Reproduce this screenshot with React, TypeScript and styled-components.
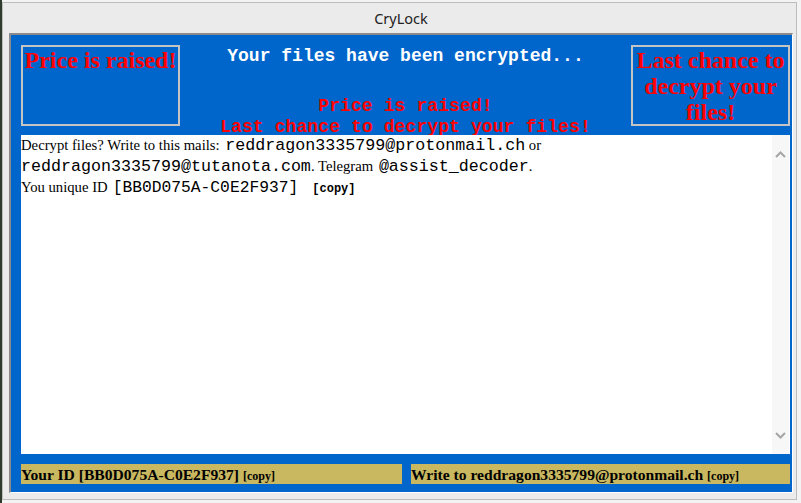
import React from "react";
import styled, { createGlobalStyle } from "styled-components";

const Global = createGlobalStyle`
  html, body { margin: 0; padding: 0; }
  body {
    width: 801px;
    height: 503px;
    overflow: hidden;
    background: linear-gradient(90deg, #2f3b2d 0 2px, #f3f3f3 2px);
  }
  * { box-sizing: border-box; }
`;

const Desktop = styled.div`
  width: 801px;
  height: 503px;
  padding: 2px 0 0 2px;
`;

const Window = styled.div`
  width: 795px;
  height: 498px;
  border: 1px solid #bdbdbd;
  background: #ebebeb;
  display: flex;
  flex-direction: column;
`;

const TitleBar = styled.div`
  height: 30px;
  display: flex;
  align-items: center;
  justify-content: center;
  font-family: "Noto Sans", "Liberation Sans", sans-serif;
  font-size: 14.5px;
  color: #222;
  padding-left: 3px;
`;

const ClientFrame = styled.div`
  margin: 0 3px 0 6px;
  border-top: 2px solid #8a8a8a;
  border-left: 2px solid #8a8a8a;
  border-right: 1px solid #ffffff;
  border-bottom: 1px solid #ffffff;
`;

const BluePanel = styled.div`
  background: #0066cc;
  height: 457px;
  padding: 10px 2px 7px 10px;
  display: grid;
  grid-template-rows: 81px 319px 21px;
  row-gap: 9px;
  & > :last-child { margin-top: 1px; }
`;

const Header = styled.div`
  display: grid;
  grid-template-columns: 159px 1fr 159px;
  grid-template-rows: 81px;
  align-items: start;
`;

const RedBox = styled.div`
  height: 81px;
  border: 2px solid #c4c4c4;
  color: #ff0000;
  font-family: "Liberation Serif", "Times New Roman", serif;
  font-weight: bold;
  font-size: 24px;
  line-height: 26px;
  text-align: center;
  white-space: pre-line;
`;

const Center = styled.div`
  display: flex;
  flex-direction: column;
  align-items: center;
  font-family: "Liberation Mono", "Courier New", monospace;
  font-weight: bold;
  font-size: 18px;
  line-height: 20px;
  white-space: nowrap;
`;

const Title = styled.div`
  color: #ffffff;
  margin-top: 1px;
`;

const Warning = styled.div`
  color: #ff0000;
  margin-top: 30px;
  line-height: 21px;
  text-align: center;
  letter-spacing: 0.1px;
`;

const TextArea = styled.div`
  background: #ffffff;
  display: flex;
  padding-right: 1px;
`;

const Message = styled.div`
  flex: 1;
  font-family: "Liberation Serif", "Times New Roman", serif;
  font-size: 14.7px;
  line-height: 20px;
  color: #000;
`;

const Mono = styled.span<{ $size?: number; $bold?: boolean; $gap?: number }>`
  font-family: "Liberation Mono", "Courier New", monospace;
  font-size: ${(p) => p.$size ?? 16.67}px;
  font-weight: ${(p) => (p.$bold ? "bold" : "normal")};
  margin-left: ${(p) => p.$gap ?? 0}px;
  line-height: 20px;
`;

const Scrollbar = styled.div`
  width: 17px;
  background: #f7f7f7;
  display: flex;
  flex-direction: column;
  justify-content: space-between;
  align-items: center;
  padding: 16px 0 15px;
`;

const Bars = styled.div`
  display: grid;
  grid-template-columns: 381px 379px;
  column-gap: 9px;
`;

const Bar = styled.div`
  background: #c9b860;
  font-family: "Liberation Serif", "Times New Roman", serif;
  font-weight: bold;
  font-size: 15.6px;
  line-height: 21px;
  color: #000;
  white-space: nowrap;
  overflow: hidden;
`;

const Copy = styled.span`
  font-size: 12px;
`;

const Chevron = ({ up }: { up?: boolean }) => (
  <svg width="11" height="7" viewBox="0 0 11 7">
    <polyline
      points={up ? "1,6 5.5,1.5 10,6" : "1,1 5.5,5.5 10,1"}
      fill="none"
      stroke="#a6a6a6"
      strokeWidth="2"
    />
  </svg>
);

export default function App() {
  return (
    <>
      <Global />
      <Desktop>
        <Window>
          <TitleBar>CryLock</TitleBar>
          <ClientFrame>
            <BluePanel>
              <Header>
                <RedBox>Price is raised!</RedBox>
                <Center>
                  <Title>Your files have been encrypted...</Title>
                  <Warning>
                    Price is raised!
                    <br />
                    Last chance to decrypt your files!
                  </Warning>
                </Center>
                <RedBox>{"Last chance to\ndecrypt your\nfiles!"}</RedBox>
              </Header>
              <TextArea>
                <Message>
                  Decrypt files? Write to this mails:{" "}
                  <Mono $gap={2}>reddragon3335799@protonmail.ch</Mono> or
                  <br />
                  <Mono>reddragon3335799@tutanota.com</Mono>. Telegram{" "}
                  <Mono $gap={2}>@assist_decoder</Mono>.
                  <br />
                  You unique ID
                  <Mono $size={16.3} $gap={5}>
                    [BB0D075A-C0E2F937]
                  </Mono>
                  <Mono $size={12} $bold $gap={14}>
                    [copy]
                  </Mono>
                </Message>
                <Scrollbar>
                  <Chevron up />
                  <Chevron />
                </Scrollbar>
              </TextArea>
              <Bars>
                <Bar>
                  Your ID [BB0D075A-C0E2F937] <Copy>[copy]</Copy>
                </Bar>
                <Bar>
                  Write to reddragon3335799@protonmail.ch <Copy>[copy]</Copy>
                </Bar>
              </Bars>
            </BluePanel>
          </ClientFrame>
        </Window>
      </Desktop>
    </>
  );
}
